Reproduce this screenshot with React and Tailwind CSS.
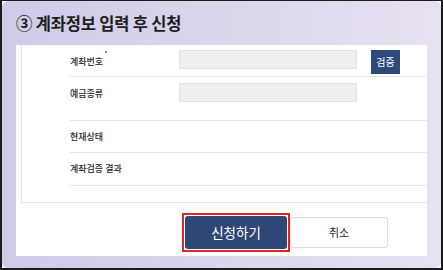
import React from "react";

const font = { fontFamily: '"Noto Sans CJK KR", "Noto Sans", sans-serif' };

const rows = [
  { label: "계좌번호", required: true, input: true, verify: true, h: "h-[32px]", pt: "pt-[5px]" },
  { label: "예금종류", input: true, h: "h-[44px]", pt: "pt-[6px]" },
  { label: "현재상태", h: "h-[32px]" },
  { label: "계좌검증 결과", h: "h-[33px]" },
];

export default function App() {
  return (
    <div
      className="w-[443px] h-[270px] bg-white border-t border-l-2 border-r-2 border-b-2 border-[#1b1b1b] overflow-hidden"
      style={font}
    >
      <div className="w-full h-full rounded-[6px] bg-gradient-to-r from-[#cecbe8] via-[#dad6ec] to-[#e7e1f0] px-[14px] pb-[12px] flex flex-col">
        {/* Title */}
        <div className="h-[44px] flex items-center shrink-0">
          <h2 className="text-[16.5px] font-bold text-[#1e1e1e] tracking-[-0.2px] leading-none">
            ③ 계좌정보 입력 후 신청
          </h2>
        </div>

        {/* White panel */}
        <div className="flex-1 bg-white pl-[5px] flex flex-col">
          <div className="border-l border-b border-[#e4e4e4] pl-[48px] pb-[16px]">
            {rows.map((row, i) => (
              <div
                key={i}
                className={`${row.h} border-b border-[#e6e6e6] flex ${row.input ? "items-start " + row.pt : "items-center"}`}
              >
                <div
                  className={`w-[109px] shrink-0 text-[9px] font-medium text-[#2a2a2a] relative ${row.input ? (row.verify ? "mt-[5px]" : "mt-[4px]") : ""}`}
                >
                  <span className="relative">
                    {row.label}
                    {row.required && (
                      <span className="absolute -right-[4px] -top-[4px] w-[2px] h-[2px] rounded-full bg-[#e5231b]" />
                    )}
                  </span>
                </div>
                {row.input && (
                  <div className="w-[178px] h-[19px] bg-[#efefef] border border-[#e2e2e2]" />
                )}
                {row.verify && (
                  <button className="ml-[14px] w-[29px] h-[24px] bg-[#2e4a7b] text-white text-[10px] leading-none flex items-center justify-center">
                    검증
                  </button>
                )}
              </div>
            ))}
          </div>

          {/* Buttons */}
          <div className="flex items-center pl-[161px] mt-[10px]">
            <div className="w-[108px] h-[39px] border-2 border-[#e3261d] p-[1px]">
              <button className="w-full h-full bg-[#2f4776] rounded-[3px] text-white text-[13.5px] leading-none">
                신청하기
              </button>
            </div>
            <button className="w-[98px] h-[31px] bg-white border border-[#dedede] rounded-[3px] text-[#222] text-[11px] leading-none">
              취소
            </button>
          </div>
        </div>
      </div>
    </div>
  );
}
